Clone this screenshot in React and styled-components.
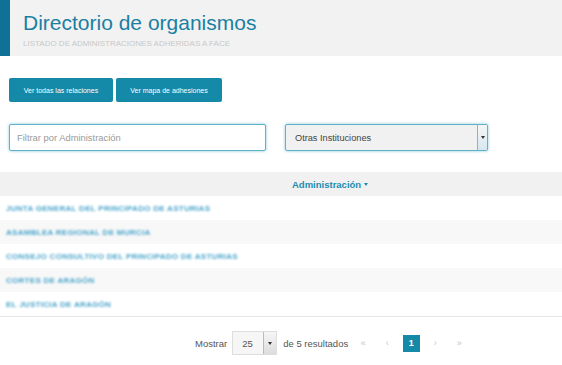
import React from 'react';
import styled, { createGlobalStyle } from 'styled-components';

const GlobalStyle = createGlobalStyle`
  body {
    margin: 0;
    background: #fff;
    font-family: "Liberation Sans", Arial, sans-serif;
  }
`;

const Header = styled.header`
  height: 56px;
  background: #f2f2f2;
  border-left: 10px solid #0f7196;
  padding: 12px 0 0 13px;
  box-sizing: border-box;
`;

const Title = styled.h1`
  margin: 0;
  font-size: 21px;
  line-height: 21px;
  font-weight: normal;
  color: #1b7fa3;
`;

const Subtitle = styled.div`
  margin-top: 6px;
  font-size: 8px;
  line-height: 9px;
  color: #c9c9c9;
  text-transform: uppercase;
`;

const Actions = styled.div`
  display: flex;
  gap: 3px;
  padding: 22px 9px 0;
`;

const Button = styled.button`
  height: 24px;
  padding: 0 12px;
  border: none;
  border-radius: 2px;
  background: #1589a8;
  color: #fff;
  font-family: inherit;
  font-size: 7px;
  width: ${p => p.$w}px;
`;

const Filters = styled.div`
  display: flex;
  gap: 19px;
  padding: 22px 9px 0;
`;

const Input = styled.input`
  width: 257px;
  height: 27px;
  box-sizing: border-box;
  border: 1px solid #5fb2c9;
  box-shadow: 0 0 3px rgba(80, 170, 200, 0.7);
  border-radius: 2px;
  padding: 0 7px;
  font-family: inherit;
  font-size: 9.4px;
  &::placeholder { color: #9a9a9a; }
`;

const Select = styled.div`
  width: 203px;
  height: 27px;
  box-sizing: border-box;
  display: flex;
  align-items: center;
  justify-content: space-between;
  background: #f1f1f1;
  border: 1px solid #5fb2c9;
  box-shadow: 0 0 3px rgba(80, 170, 200, 0.7);
  border-radius: 2px;
  padding-left: 9px;
  font-size: 9.2px;
  color: #444;
`;

const Caret = styled.span`
  align-self: stretch;
  width: ${p => p.$w || 9}px;
  border-left: 1px solid ${p => p.$line || '#7bb9cc'};
  background: linear-gradient(#f6f6f6, ${p => p.$bg || '#d6e7f0'});
  display: flex;
  align-items: center;
  justify-content: center;
  &::after {
    content: '';
    border-left: 2px solid transparent;
    border-right: 2px solid transparent;
    border-top: 3px solid #333;
  }
`;

const Table = styled.div`
  margin-top: 21px;
  border-bottom: 1px solid #e6e6e6;
`;

const HeadRow = styled.div`
  height: 24px;
  background: #f1f1f1;
  display: flex;
  align-items: center;
  padding-left: 292px;
  font-size: 9.5px;
  font-weight: bold;
  color: #1d8cb0;
  gap: 3px;
`;

const SortArrow = styled.span`
  border-left: 2.5px solid transparent;
  border-right: 2.5px solid transparent;
  border-top: 3px solid #1d8cb0;
`;

const Row = styled.div`
  height: 24px;
  display: flex;
  align-items: center;
  padding-left: 6px;
  background: ${p => (p.$odd ? '#f8f8f8' : '#fff')};
`;

const RowText = styled.span`
  font-size: 8px;
  font-weight: bold;
  letter-spacing: 0.28px;
  color: #4aa6cc;
  text-transform: uppercase;
  filter: blur(0.9px);
`;

const Footer = styled.div`
  display: flex;
  align-items: center;
  padding: 14px 0 0 195px;
  font-size: 9.5px;
  color: #555;
`;

const PageSize = styled.div`
  display: flex;
  align-items: center;
  width: 45px;
  height: 24px;
  box-sizing: border-box;
  margin: 0 6px 0 5px;
  background: #f6f6f6;
  border: 1px solid #dedede;
  padding-left: 9px;
  justify-content: space-between;
`;

const Pager = styled.div`
  display: flex;
  align-items: center;
  margin-left: 3px;
`;

const PageLink = styled.span`
  display: flex;
  align-items: center;
  justify-content: center;
  width: ${p => (p.$active ? 17 : 24)}px;
  margin: 0 ${p => (p.$active ? 3.5 : 0)}px;
  height: 17px;
  font-size: 9px;
  color: ${p => (p.$active ? '#fff' : '#c4c4c4')};
  background: ${p => (p.$active ? '#1589a8' : 'transparent')};
  font-weight: ${p => (p.$active ? 'bold' : 'normal')};
`;

const rows = [
  'Junta General del Principado de Asturias',
  'Asamblea Regional de Murcia',
  'Consejo Consultivo del Principado de Asturias',
  'Cortes de Aragón',
  'El Justicia de Aragón',
];

export default function App() {
  return (
    <>
      <GlobalStyle />
      <Header>
        <Title>Directorio de organismos</Title>
        <Subtitle>Listado de administraciones adheridas a FACe</Subtitle>
      </Header>
      <Actions>
        <Button $w={104}>Ver todas las relaciones</Button>
        <Button $w={106}>Ver mapa de adhesiones</Button>
      </Actions>
      <Filters>
        <Input placeholder="Filtrar por Administración" />
        <Select>
          Otras Instituciones
          <Caret />
        </Select>
      </Filters>
      <Table>
        <HeadRow>
          Administración <SortArrow />
        </HeadRow>
        {rows.map((r, i) => (
          <Row key={r} $odd={i % 2 === 1}>
            <RowText>{r}</RowText>
          </Row>
        ))}
      </Table>
      <Footer>
        Mostrar
        <PageSize>
          25
          <Caret $w={12} $line="#bbb" $bg="#dcdcdc" />
        </PageSize>
        de 5 resultados
        <Pager>
          <PageLink>«</PageLink>
          <PageLink>‹</PageLink>
          <PageLink $active>1</PageLink>
          <PageLink>›</PageLink>
          <PageLink>»</PageLink>
        </Pager>
      </Footer>
    </>
  );
}
